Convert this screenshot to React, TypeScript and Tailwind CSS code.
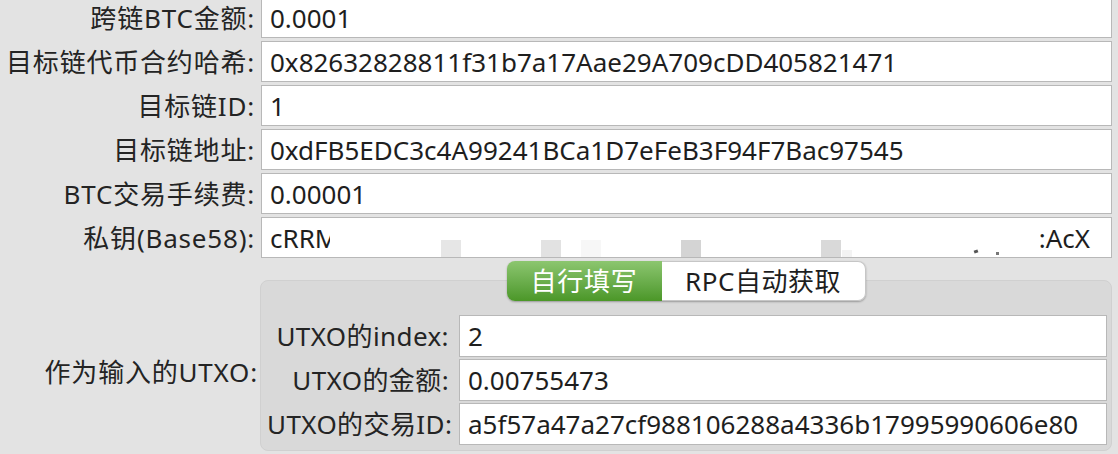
const fieldRows = [
  { label: '跨链BTC金额:', value: '0.0001' },
  { label: '目标链代币合约哈希:', value: '0x82632828811f31b7a17Aae29A709cDD405821471' },
  { label: '目标链ID:', value: '1' },
  { label: '目标链地址:', value: '0xdFB5EDC3c4A99241BCa1D7eFeB3F94F7Bac97545' },
  { label: 'BTC交易手续费:', value: '0.00001' },
];

const utxoRows = [
  { label: 'UTXO的index:', value: '2' },
  { label: 'UTXO的金额:', value: '0.00755473' },
  { label: 'UTXO的交易ID:', value: 'a5f57a47a27cf988106288a4336b17995990606e80' },
];

function TextBox({ value, className = '' }: { value: string; className?: string }) {
  return (
    <div
      className={`flex-1 flex items-center bg-white border border-[#b8b8b8] pl-[8px] overflow-hidden whitespace-nowrap text-[#1e1e1e] ${className}`}
    >
      {value}
    </div>
  );
}

export default function App() {
  return (
    <div
      className="w-[1118px] h-[454px] overflow-hidden bg-[#e3e3e3] text-[26px] leading-none text-[#242424]"
      style={{ fontFamily: '"Noto Sans", "Noto Sans CJK SC", sans-serif' }}
    >
      <div className="flex flex-col gap-[3px] -mt-[3px] pr-[6px]">
        {fieldRows.map((row) => (
          <div key={row.label} className="flex h-[41px] items-center">
            <div className="w-[255px] text-right whitespace-nowrap tracking-[0.8px]">{row.label}</div>
            <TextBox value={row.value} className="ml-[6px] h-[41px]" />
          </div>
        ))}

        {/* Private key row, partially redacted */}
        <div className="flex h-[41px] items-center">
          <div className="w-[255px] text-right whitespace-nowrap tracking-[0.8px]">私钥(Base58):</div>
          <div className="relative ml-[6px] flex-1 h-[41px] flex items-center bg-white border border-[#b8b8b8] pl-[8px]">
            <span className="inline-block w-[60px] overflow-hidden whitespace-nowrap text-[#1e1e1e]">cRRM</span>
            <span className="absolute left-[179px] top-[22px] w-[20px] h-[17px] bg-[#e6e6e6]" />
            <span className="absolute left-[279px] top-[22px] w-[20px] h-[17px] bg-[#e2e2e2]" />
            <span className="absolute left-[319px] top-[22px] w-[20px] h-[17px] bg-[#f7f7f7]" />
            <span className="absolute left-[419px] top-[22px] w-[20px] h-[17px] bg-[#d4d4d4]" />
            <span className="absolute left-[559px] top-[22px] w-[20px] h-[17px] bg-[#d9d9d9]" />
            <span className="absolute left-[580px] top-[32px] w-[10px] h-[7px] bg-[#f3f3f3]" />
            <span className="absolute left-[712px] top-[32px] w-[4px] h-[3px] bg-[#555] rotate-[-20deg]" />
            <span className="absolute left-[734px] top-[34px] w-[3px] h-[3px] bg-[#777]" />
            <span className="absolute right-[21px] top-0 h-full flex items-center text-[#1e1e1e]">:AcX</span>
          </div>
        </div>

        {/* Input UTXO section */}
        <div className="flex items-start">
          <div className="w-[258px] mt-[98px] text-right whitespace-nowrap tracking-[0.8px]">作为输入的UTXO:</div>
          <div className="ml-[2px] flex-1 flex flex-col items-center">
            <div className="relative z-10 flex h-[40px] rounded-[8px] shadow-[0_1px_2px_rgba(0,0,0,0.3)]">
              <div className="w-[155px] flex items-center justify-center rounded-l-[8px] bg-gradient-to-b from-[#8cc66f] to-[#4b9727] text-white tracking-[0.8px]">
                自行填写
              </div>
              <div className="w-[204px] flex items-center justify-center rounded-r-[8px] bg-white border border-l-0 border-[#c6c6c6] text-[#1e1e1e] tracking-[0.5px]">
                RPC自动获取
              </div>
            </div>
            <div className="-mt-[21px] w-full h-[171px] rounded-[8px] bg-[#d9d9d9] border border-[#d0d0d0] pt-[34px] pl-[6px] pr-[4px] flex flex-col gap-[2px]">
              {utxoRows.map((row) => (
                <div key={row.label} className="flex h-[42px] items-center">
                  <div className="w-[182px] text-right whitespace-nowrap tracking-[0.4px]">{row.label}</div>
                  <TextBox value={row.value} className="ml-[10px] h-[42px] border-[#ababab]" />
                </div>
              ))}
            </div>
          </div>
        </div>
      </div>
    </div>
  );
}
